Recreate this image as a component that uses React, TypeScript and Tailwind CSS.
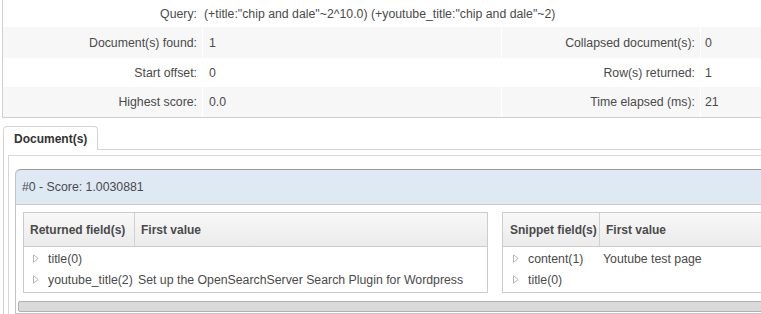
import React from "react";

function Tri() {
  return (
    <svg width="6" height="9" viewBox="0 0 6 9" className="shrink-0">
      <path d="M0.5 0.8 L5.2 4.5 L0.5 8.2 Z" fill="none" stroke="#b5b5b5" strokeWidth="1" />
    </svg>
  );
}

function StatRow({
  bg,
  h,
  l1,
  v1,
  l2,
  v2,
}: {
  bg: string;
  h: string;
  l1: string;
  v1: string;
  l2: string;
  v2: string;
}) {
  return (
    <div className={`flex ${h} ${bg}`}>
      <div className="w-[200px] border-r border-white flex items-center justify-end pr-[5px]">{l1}</div>
      <div className="w-[299px] border-r border-white flex items-center pl-[6px]">{v1}</div>
      <div className="w-[199px] border-r border-white flex items-center justify-end pr-[5px]">{l2}</div>
      <div className="flex-1 flex items-center pl-[4px]">{v2}</div>
    </div>
  );
}

export default function App() {
  return (
    <div className="w-[761px] h-[314px] overflow-hidden bg-white text-[12.3px] leading-[14px] text-[#4a4a4a] font-['Liberation_Sans',Arial,sans-serif]">
      {/* statistics table */}
      <div className="ml-[2px] w-[800px] border-l border-b border-[#cfcfcf]">
        <div className="flex h-[27px] bg-white">
          <div className="w-[199px] flex items-center justify-end pr-[5px]">Query:</div>
          <div className="flex-1 flex items-center pl-[2px]">
            (+title:"chip and dale"~2^10.0) (+youtube_title:"chip and dale"~2)
          </div>
        </div>
        <StatRow bg="bg-[#f7f7f7]" h="h-[31px]" l1="Document(s) found:" v1="1" l2="Collapsed document(s):" v2="0" />
        <StatRow bg="bg-white" h="h-[29px]" l1="Start offset:" v1="0" l2="Row(s) returned:" v2="1" />
        <StatRow bg="bg-[#f7f7f7]" h="h-[30px]" l1="Highest score:" v1="0.0" l2="Time elapsed (ms):" v2="21" />
      </div>

      {/* tabs */}
      <div className="mt-[8px] ml-[3px] w-[800px]">
        <div className="flex items-end h-[24px]">
          <div className="w-[95px] h-[24px] border border-b-0 border-[#d4d4d4] rounded-t-[4px] flex items-center pl-[10px] text-[12px] font-bold text-[#333] bg-white">
            Document(s)
          </div>
          <div className="flex-1 border-b border-[#d4d4d4]" />
        </div>
        <div className="border-l border-[#d4d4d4] pl-[4px] pt-[5px]">
          <div className="border-l border-t border-[#d8d8d8] pl-[6px] pt-[13px]">
            {/* card */}
            <div className="border-l border-[#c4c4c4] rounded-tl-[5px]">
              <div className="h-[36px] border-t border-[#9a9a9a] border-b border-b-[#c8c8c8] rounded-tl-[5px] bg-[#dfe9f3] flex items-center pl-[6px]">
                #0 - Score: 1.0030881
              </div>
              <div className="pl-[7px] pt-[7px] flex">
                {/* returned fields */}
                <div className="w-[465px] border border-[#cccccc]">
                  <div className="flex h-[34px] border-b border-[#cccccc] bg-gradient-to-b from-[#f8f8f8] to-[#ebebeb] font-bold text-[12px]">
                    <div className="w-[111px] border-r border-[#d0d0d0] flex items-center pl-[6px]">Returned field(s)</div>
                    <div className="flex items-center pl-[6px]">First value</div>
                  </div>
                  <div className="pt-[1px] pb-[2px]">
                    <div className="flex items-center h-[21px] pl-[9px]">
                      <Tri />
                      <div className="ml-[9px] w-[90px]">title(0)</div>
                    </div>
                    <div className="flex items-center h-[21px] pl-[9px]">
                      <Tri />
                      <div className="ml-[9px] w-[90px]">youtube_title(2)</div>
                      <div>Set up the OpenSearchServer Search Plugin for Wordpress</div>
                    </div>
                  </div>
                </div>
                {/* snippet fields */}
                <div className="ml-[14px] w-[300px] border border-[#cccccc]">
                  <div className="flex h-[34px] border-b border-[#cccccc] bg-gradient-to-b from-[#f8f8f8] to-[#ebebeb] font-bold text-[12px]">
                    <div className="w-[97px] border-r border-[#d0d0d0] flex items-center pl-[7px]">Snippet field(s)</div>
                    <div className="flex items-center pl-[6px]">First value</div>
                  </div>
                  <div className="pt-[1px] pb-[2px]">
                    <div className="flex items-center h-[21px] pl-[10px]">
                      <Tri />
                      <div className="ml-[9px] w-[75px]">content(1)</div>
                      <div>Youtube test page</div>
                    </div>
                    <div className="flex items-center h-[21px] pl-[10px]">
                      <Tri />
                      <div className="ml-[9px] w-[75px]">title(0)</div>
                    </div>
                  </div>
                </div>
              </div>
              {/* scrollbar */}
              <div className="mt-[8px] ml-[2px] h-[11px] border border-[#b0b0b0] rounded-[2px] bg-[#dadada]" />
              <div className="h-[4px] border-t border-[#c8c8c8] mt-[1px]" />
            </div>
          </div>
        </div>
      </div>
    </div>
  );
}
